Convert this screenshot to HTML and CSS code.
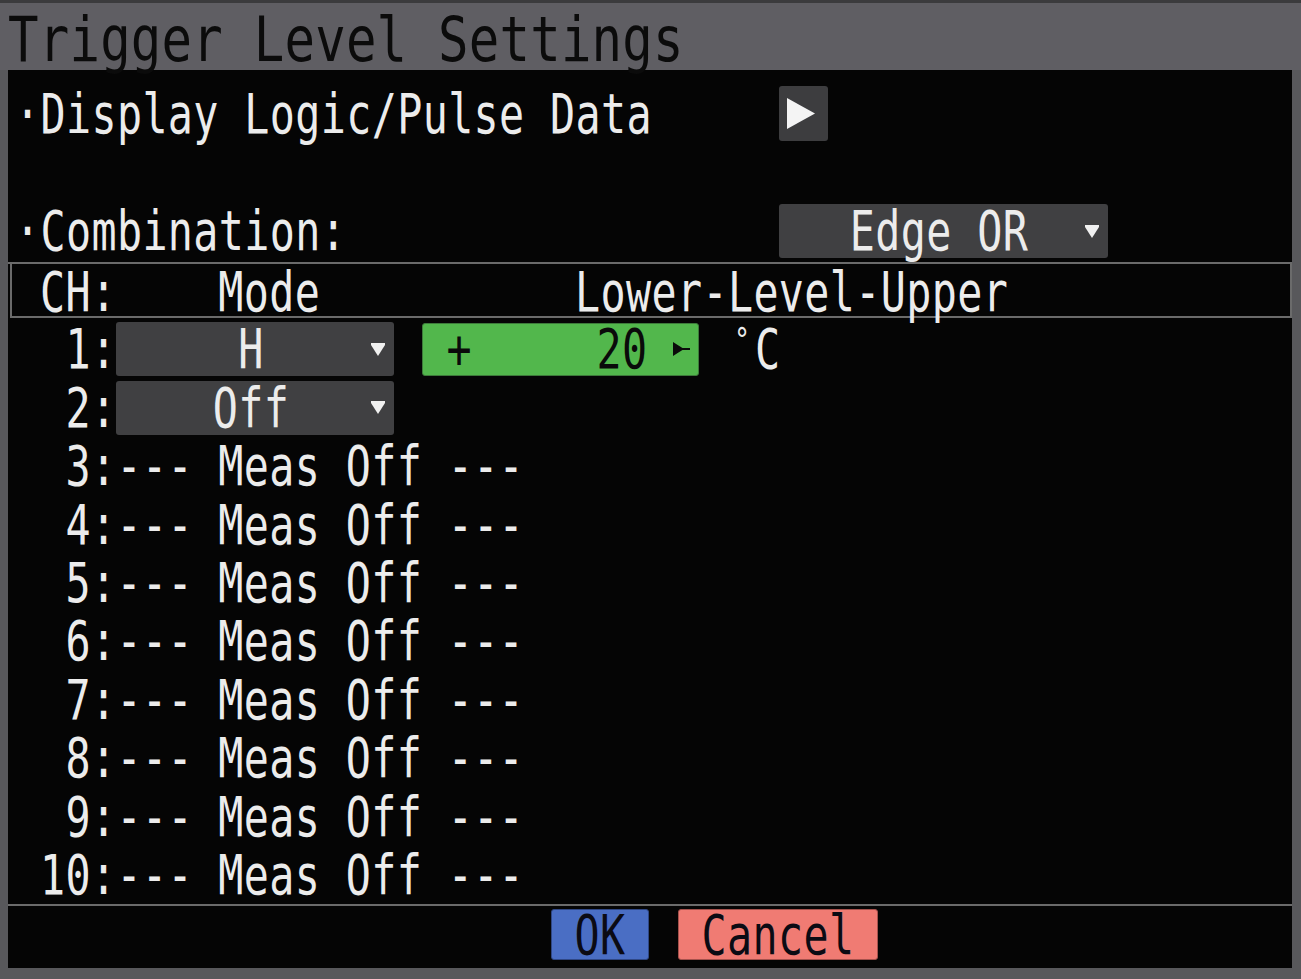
FILE: index.html
```html
<!DOCTYPE html>
<html>
<head>
<meta charset="utf-8">
<title>Trigger Level Settings</title>
<link rel="stylesheet" href="styles.css">
</head>
<body>
<div class="screen">
  <div class="titlebar"><span class="t title">Trigger Level Settings</span></div>
  <div class="panel">
    <div class="opts">
      <div class="opt">
        <span class="t">·Display Logic/Pulse Data</span>
        <div class="playbtn">
          <svg width="28" height="31" viewBox="0 0 28 31"><polygon points="0,0 28,15.5 0,31" fill="#f4f4f4"/></svg>
        </div>
      </div>
      <div class="opt">
        <span class="t">·Combination:</span>
        <div class="select select-wide">
          <span></span>
          <span class="t">Edge OR</span>
          <svg class="caret" width="14" height="13" viewBox="0 0 14 13"><polygon points="0,0 14,0 14,2 7,13 0,2" fill="#f0f0f0"/></svg>
        </div>
      </div>
    </div>
    <div class="header"><span class="t">CH:    Mode          Lower-Level-Upper</span></div>
    <div class="rows">
      <div class="row">
        <span class="t"> 1:</span>
        <div class="select select-mode">
          <span></span>
          <span class="t">H</span>
          <svg class="caret" width="14" height="13" viewBox="0 0 14 13"><polygon points="0,0 14,0 14,2 7,13 0,2" fill="#f0f0f0"/></svg>
        </div>
        <div class="level">
          <span class="t">+</span>
          <span class="t level-val">20</span>
          <svg class="level-arrow" width="17" height="16" viewBox="0 0 17 16"><polygon points="0,1 11,8 0,15" fill="#0a0a0a"/><rect x="9" y="7" width="8" height="2" fill="#0a0a0a"/></svg>
        </div>
        <span class="t unit"><span class="deg">°</span>C</span>
      </div>
      <div class="row">
        <span class="t"> 2:</span>
        <div class="select select-mode">
          <span></span>
          <span class="t">Off</span>
          <svg class="caret" width="14" height="13" viewBox="0 0 14 13"><polygon points="0,0 14,0 14,2 7,13 0,2" fill="#f0f0f0"/></svg>
        </div>
      </div>
      <div class="row"><span class="t"> 3:--- Meas Off ---</span></div>
      <div class="row"><span class="t"> 4:--- Meas Off ---</span></div>
      <div class="row"><span class="t"> 5:--- Meas Off ---</span></div>
      <div class="row"><span class="t"> 6:--- Meas Off ---</span></div>
      <div class="row"><span class="t"> 7:--- Meas Off ---</span></div>
      <div class="row"><span class="t"> 8:--- Meas Off ---</span></div>
      <div class="row"><span class="t"> 9:--- Meas Off ---</span></div>
      <div class="row"><span class="t">10:--- Meas Off ---</span></div>
    </div>
    <div class="footer">
      <div class="btn btn-ok"><span class="t">OK</span></div>
      <div class="btn btn-cancel"><span class="t">Cancel</span></div>
    </div>
  </div>
</div>
</body>
</html>
```
FILE: styles.css
```css
* { box-sizing: border-box; margin: 0; padding: 0; }
html, body { width: 1301px; height: 979px; overflow: hidden; background: #58585b; }
body {
  font-family: "DejaVu Sans Mono", "Liberation Mono", monospace;
  font-size: 41.7px;
  letter-spacing: 0.38px;
  color: #ececec;
}
.screen {
  width: 1301px;
  height: 979px;
  display: flex;
  flex-direction: column;
  background: #58585b;
  border-top: 3px solid #3b3b3d;
}
.titlebar {
  height: 67px;
  flex: none;
  background: #5f5e63;
  display: flex;
  align-items: center;
  padding: 7px 0 0 8px;
}
.t {
  display: inline-block;
  white-space: pre;
  line-height: 0.85;
  transform: scaleY(1.32);
}
.title {
  font-size: 50.7px;
  letter-spacing: 0.2px;
  color: #0b0b0b;
  transform: scaleY(1.22);
}
.panel {
  flex: 1;
  margin: 0 9px 11px 8px;
  background: #050505;
  display: flex;
  flex-direction: column;
}
.opts {
  height: 194px;
  flex: none;
  border-bottom: 2px solid #6b6b6b;
  padding: 16px 0 0 7px;
  display: flex;
  flex-direction: column;
  gap: 63px;
}
.opt {
  display: grid;
  grid-template-columns: 764px auto;
  align-items: center;
}
.playbtn {
  width: 49px;
  height: 55px;
  background: #3d3d3f;
  border-radius: 3px;
  display: flex;
  align-items: center;
  padding-left: 8px;
}
.select {
  display: grid;
  grid-template-columns: 1fr auto 1fr;
  align-items: center;
  background: #404042;
  border-radius: 3px;
  padding-right: 9px;
}
.select .caret { justify-self: end; }
.select-wide { width: 329px; height: 54px; }
.select-mode { width: 278px; height: 54px; }
.header {
  height: 54px;
  flex: none;
  margin-left: 2px;
  border: 2px solid #6b6b6b;
  border-top: none;
  display: flex;
  align-items: center;
  padding: 3px 0 0 28px;
}
.rows {
  height: 586px;
  flex: none;
  padding: 2px 0 0 32px;
  display: flex;
  flex-direction: column;
}
.row {
  height: 58.4px;
  flex: none;
  display: flex;
  align-items: center;
}
.level {
  width: 277px;
  height: 53px;
  margin-left: 28px;
  background: #52b74c;
  border: 1px solid #3d7a3a;
  border-radius: 3px;
  display: flex;
  align-items: center;
  padding: 0 8px 0 23px;
  color: #0a0a0a;
}
.level-val { margin-left: auto; }
.level-arrow { margin-left: 26px; }
.unit { margin-left: 30px; }
.deg {
  display: inline-block;
  width: 25.5px;
  font-size: 26px;
  vertical-align: top;
  text-align: center;
}
.footer {
  flex: 1;
  border-top: 2px solid #6b6b6b;
  display: flex;
  align-items: flex-start;
  gap: 29px;
  padding: 3px 0 0 543px;
}
.btn {
  height: 51px;
  border-radius: 3px;
  display: flex;
  align-items: center;
  justify-content: center;
  color: #0b0b14;
}
.btn-ok { width: 98px; background: #4a6ec4; border: 1px solid #2f4785; }
.btn-cancel { width: 200px; background: #f07b73; border: 1px solid #a5514c; }
```
